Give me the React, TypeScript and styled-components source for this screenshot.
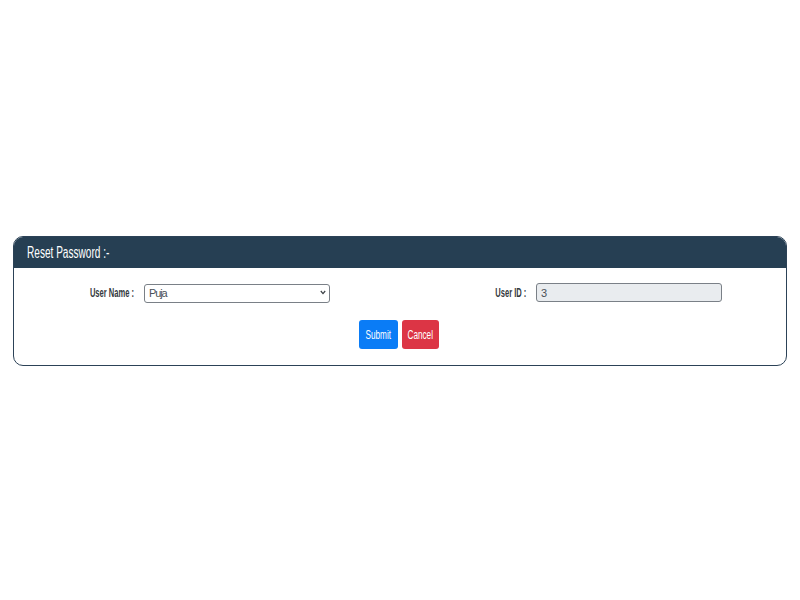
import React, { useState } from 'react';
import styled, { createGlobalStyle } from 'styled-components';

const GlobalStyle = createGlobalStyle`
  html, body {
    margin: 0;
    padding: 0;
    background: #ffffff;
    font-family: "Liberation Sans", Arial, sans-serif;
  }
`;

// the reference uses a narrow face; squeeze the regular one horizontally
const Narrow = styled.span<{ $scale?: number; $origin?: string }>`
  display: inline-block;
  white-space: nowrap;
  transform: scaleX(${(p) => p.$scale ?? 0.63});
  transform-origin: ${(p) => p.$origin ?? 'left'} center;
`;

const Page = styled.div`
  width: 800px;
  height: 600px;
  padding: 236px 13px 0;
  box-sizing: border-box;
`;

const Card = styled.div`
  border: 1px solid #2c4257;
  border-radius: 10px;
  overflow: hidden;
  height: 130px;
  box-sizing: border-box;
`;

const CardHeader = styled.div`
  background: #263f53;
  color: #ffffff;
  height: 31px;
  display: flex;
  align-items: center;
  padding-left: 13px;
  font-size: 16px;
`;

const Body = styled.div`
  padding-top: 15px;
  display: flex;
  flex-direction: column;
  gap: 18px;
`;

const Row = styled.div`
  display: grid;
  grid-template-columns: 392px 1fr;
`;

const Field = styled.div`
  display: flex;
  align-items: center;
`;

const Label = styled.label`
  width: 120px;
  padding-right: 10px;
  text-align: right;
  font-size: 12px;
  font-weight: bold;
  color: #343a40;
`;

const inputBase = `
  width: 186px;
  height: 19px;
  box-sizing: border-box;
  border: 1px solid #7a8087;
  border-radius: 3px;
  font-family: "Liberation Sans", Arial, sans-serif;
  font-size: 11px;
  letter-spacing: -1.1px;
  color: #495057;
  padding: 0 4px;
  outline: none;
`;

const SelectWrap = styled.div`
  position: relative;
  width: 186px;
  height: 19px;
`;

const Select = styled.select`
  ${inputBase}
  appearance: none;
  -webkit-appearance: none;
  background: #ffffff;
`;

const Chevron = styled.svg`
  position: absolute;
  right: 4px;
  top: 7px;
  pointer-events: none;
`;

const TextInput = styled.input<{ $readOnly?: boolean }>`
  ${inputBase}
  background: ${(p) => (p.$readOnly ? '#e9ecef' : '#ffffff')};
`;

const Actions = styled.div`
  display: flex;
  justify-content: center;
  gap: 4px;
  padding-right: 2px;
`;

const Button = styled.button<{ $variant: 'primary' | 'danger'; $width: number }>`
  width: ${(p) => p.$width}px;
  height: 29px;
  padding: 0;
  border: none;
  border-radius: 3px;
  font-family: inherit;
  font-size: 13px;
  color: #ffffff;
  background: ${(p) => (p.$variant === 'primary' ? '#0a7cf6' : '#dc3545')};
  display: flex;
  align-items: center;
  justify-content: center;
  overflow: visible;
  cursor: pointer;
`;

export default function App() {
  const [user, setUser] = useState('Puja');

  return (
    <>
      <GlobalStyle />
      <Page>
        <Card>
          <CardHeader>
            <Narrow>Reset Password :-</Narrow>
          </CardHeader>
          <Body>
            <Row>
              <Field>
                <Label>
                  <Narrow $origin="right">User Name :</Narrow>
                </Label>
                <SelectWrap>
                  <Select value={user} onChange={(e) => setUser(e.target.value)}>
                    <option>Puja</option>
                  </Select>
                  <Chevron width="6" height="5" viewBox="0 0 6 5">
                    <path d="M0.8 1 L3 3.6 L5.2 1" fill="none" stroke="#3a3f44" strokeWidth="1.2" />
                  </Chevron>
                </SelectWrap>
              </Field>
              <Field>
                <Label>
                  <Narrow $origin="right">User ID :</Narrow>
                </Label>
                <TextInput $readOnly readOnly value="3" />
              </Field>
            </Row>
            <Actions>
              <Button $variant="primary" $width={39}>
                <Narrow $origin="center">Submit</Narrow>
              </Button>
              <Button $variant="danger" $width={37}>
                <Narrow $origin="center">Cancel</Narrow>
              </Button>
            </Actions>
          </Body>
        </Card>
      </Page>
    </>
  );
}
